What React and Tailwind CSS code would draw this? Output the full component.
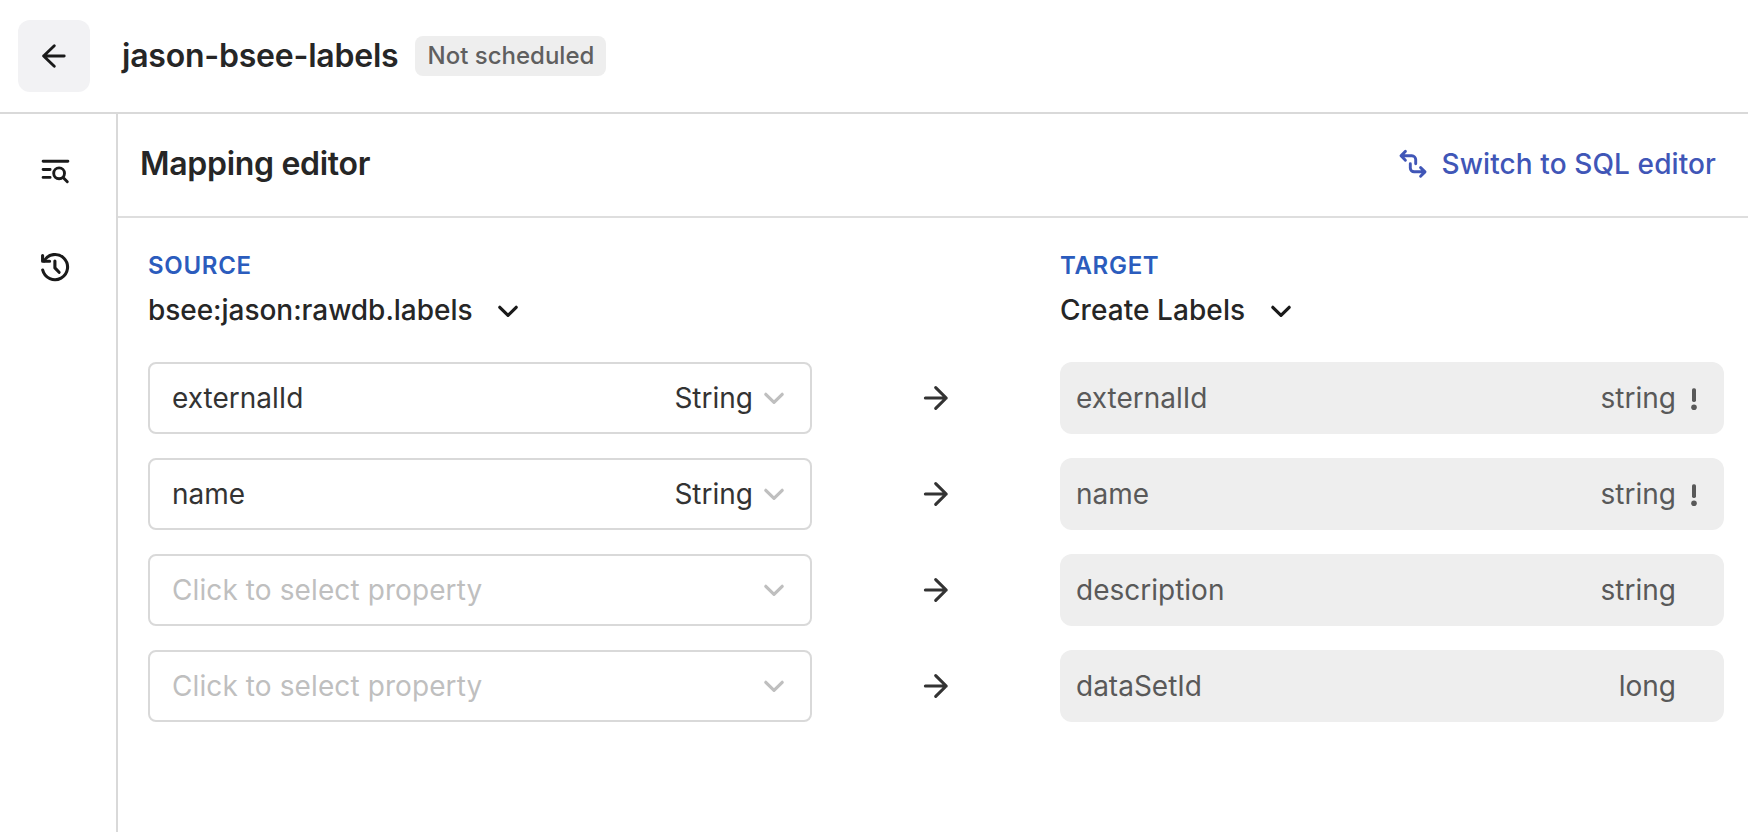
const rows = [
  { source: "externalId", sourceType: "String", target: "externalId", targetType: "string", required: true },
  { source: "name", sourceType: "String", target: "name", targetType: "string", required: true },
  { source: null, sourceType: null, target: "description", targetType: "string", required: false },
  { source: null, sourceType: null, target: "dataSetId", targetType: "long", required: false },
];

function Icon({ size = 32, stroke = 2.9, className = "", children }) {
  return (
    <svg
      width={size}
      height={size}
      viewBox={`0 0 ${size} ${size}`}
      fill="none"
      stroke="currentColor"
      strokeWidth={stroke}
      strokeLinecap="round"
      strokeLinejoin="round"
      className={`shrink-0 ${className}`}
    >
      {children}
    </svg>
  );
}

const ArrowLeft = () => (
  <Icon className="text-[#1a1a1a]">
    <path d="M26.2 16H5.6M16.3 5.7L5.6 16l10.7 10.3" />
  </Icon>
);

const ArrowRight = () => (
  <Icon stroke={3.1} className="text-[#333333]">
    <path d="M5.4 16h20.8M15.7 5.7L26.2 16 15.7 26.3" />
  </Icon>
);

const ChevronDown = ({ className }) => (
  <Icon size={24} stroke={3.2} className={className}>
    <path d="M3.8 8.3L12 16.4l8.2-8.1" />
  </Icon>
);

const ListSearch = () => (
  <Icon className="text-[#1a1a1a]">
    <path d="M4.1 6.3h24.8M4.1 14.5h7M4.1 22.4h7" />
    <circle cx="20.1" cy="18.3" r="5.4" />
    <path d="M24.1 22.5l4.2 4.2" />
  </Icon>
);

const History = () => (
  <Icon stroke={3.1} className="text-[#1a1a1a]">
    <path d="M3.7 19A12.6 12.6 0 1 0 5 9.9" />
    <path d="M3.6 4.6v5.7h7" />
    <path d="M15.9 10v6.9l4.2 4.4" />
  </Icon>
);

const Switch = () => (
  <Icon>
    <path d="M3.2 7.8h10.7a3.8 3.8 0 0 1 3.8 3.8v4.2M7.4 3.4L3 7.8l4.4 4.4" />
    <path d="M12.3 15.8v4.2a3.8 3.8 0 0 0 3.8 3.8h10.7M22.6 19.6l4.4 4.3-4.4 4.3" />
  </Icon>
);

const Required = () => (
  <svg width="12" height="24" viewBox="0 0 12 24" fill="currentColor">
    <rect x="4" y="1.3" width="4" height="13.6" rx="1.6" />
    <circle cx="6" cy="20.3" r="2.8" />
  </svg>
);

function ColumnHeader({ label, value, tracking }) {
  return (
    <div className="w-[664px]">
      <div className="text-2xl/8 font-semibold tracking-[0.7px] text-[#2b5cbd]">{label}</div>
      <div className="mt-2 flex items-center gap-6 text-[28px]/10 font-medium text-[#262626]">
        <span className={tracking}>{value}</span>
        <ChevronDown className="mt-0.5 text-[#1a1a1a]" />
      </div>
    </div>
  );
}

function MappingRow({ row }) {
  return (
    <div className="flex h-[72px] items-center justify-between text-[28px]/10">
      <div className="flex h-full w-[664px] items-center rounded-lg border-2 border-[#d9d9d9] pr-6 pl-[22px] text-[#333333]">
        {row.source ? (
          <span>{row.source}</span>
        ) : (
          <span className="tracking-[0.1px] text-[#bfbfbf]">Click to select property</span>
        )}
        <span className="ml-auto">{row.sourceType}</span>
        <ChevronDown className="ml-[9px] text-[#bfbfbf]" />
      </div>
      <ArrowRight />
      <div className="flex h-full w-[664px] items-center rounded-xl bg-[#eeeeee] px-4 text-[#595959]">
        <span>{row.target}</span>
        <span className="ml-auto">{row.targetType}</span>
        <span className="ml-3 flex w-5 justify-start pt-0.5">{row.required && <Required />}</span>
      </div>
    </div>
  );
}

export default function App() {
  return (
    <div className="flex h-[832px] w-[1748px] flex-col overflow-hidden bg-white font-[Inter,sans-serif]">
      <header className="flex h-[114px] shrink-0 items-center border-b-2 border-[#d9d9d9] pl-[18px]">
        <button className="flex size-[72px] items-center justify-center rounded-xl bg-[#f2f2f4]">
          <ArrowLeft />
        </button>
        <h1 className="ml-8 text-[32px]/10 font-semibold tracking-[-0.22px] text-[#262626]">jason-bsee-labels</h1>
        <span className="ml-[17px] flex h-10 w-[191px] items-center justify-center rounded-lg bg-[#eeeeee] text-2xl/8 font-medium text-[#5f5f5f]">
          Not scheduled
        </span>
      </header>
      <div className="flex grow">
        <nav className="flex w-[118px] shrink-0 flex-col items-center gap-16 border-r-2 border-[#d9d9d9] pt-[41px] pr-[7px]">
          <ListSearch />
          <History />
        </nav>
        <main className="grow">
          <div className="flex h-[104px] items-center justify-between border-b-2 border-[#dedede] pr-8 pb-1 pl-[22px]">
            <h2 className="pt-0.5 text-[32px]/10 font-semibold tracking-[-0.3px] text-[#262626]">Mapping editor</h2>
            <button className="flex items-center gap-3 pt-0.5 text-[28px]/10 font-medium tracking-[0.1px] text-[#4056b7]">
              <Switch />
              Switch to SQL editor
            </button>
          </div>
          <section className="flex flex-col gap-6 pt-8 pr-6 pl-[30px]">
            <div className="mb-2 flex justify-between">
              <ColumnHeader label="SOURCE" value="bsee:jason:rawdb.labels" tracking="tracking-[-0.04px]" />
              <ColumnHeader label="TARGET" value="Create Labels" tracking="tracking-[0.07px]" />
            </div>
            {rows.map((row) => (
              <MappingRow key={row.target} row={row} />
            ))}
          </section>
        </main>
      </div>
    </div>
  );
}
